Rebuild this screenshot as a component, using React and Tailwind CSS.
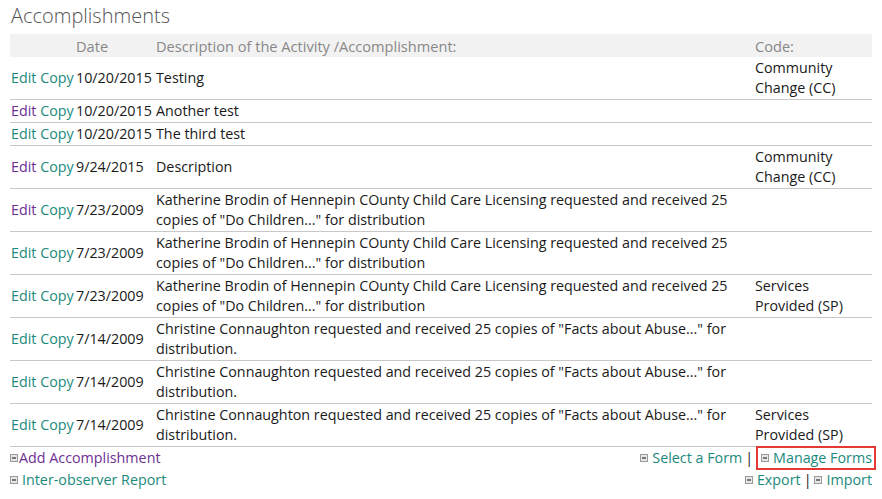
import React from 'react';

const TEAL = 'text-[#1b8a7c]';
const PURPLE = 'text-[#6e2f93]';

const rows = [
  { v: false, date: '10/20/2015', desc: ['Testing'], code: ['Community', 'Change (CC)'] },
  { v: true, date: '10/20/2015', desc: ['Another test'] },
  { v: false, date: '10/20/2015', desc: ['The third test'] },
  { v: true, date: '9/24/2015', desc: ['Description'], code: ['Community', 'Change (CC)'] },
  {
    v: true,
    date: '7/23/2009',
    desc: ['Katherine Brodin of Hennepin COunty Child Care Licensing requested and received 25', 'copies of "Do Children..." for distribution'],
  },
  {
    v: false,
    date: '7/23/2009',
    desc: ['Katherine Brodin of Hennepin COunty Child Care Licensing requested and received 25', 'copies of "Do Children..." for distribution'],
  },
  {
    v: false,
    date: '7/23/2009',
    desc: ['Katherine Brodin of Hennepin COunty Child Care Licensing requested and received 25', 'copies of "Do Children..." for distribution'],
    code: ['Services', 'Provided (SP)'],
  },
  {
    v: false,
    date: '7/14/2009',
    desc: ['Christine Connaughton requested and received 25 copies of "Facts about Abuse..." for', 'distribution.'],
  },
  {
    v: false,
    date: '7/14/2009',
    desc: ['Christine Connaughton requested and received 25 copies of "Facts about Abuse..." for', 'distribution.'],
  },
  {
    v: false,
    date: '7/14/2009',
    desc: ['Christine Connaughton requested and received 25 copies of "Facts about Abuse..." for', 'distribution.'],
    code: ['Services', 'Provided (SP)'],
  },
];

function Box({ tight }) {
  return (
    <span
      className={`inline-flex items-center justify-center w-[8px] h-[8px] border border-[#9a9a9a] bg-[#e6e6e6] align-middle relative top-[-1px] ${
        tight ? 'mr-[1px]' : 'mr-[4px]'
      }`}
    >
      <span className="w-[4px] h-[2px] bg-[#777]" />
    </span>
  );
}

function Lines({ lines }) {
  return lines.map((l, i) => (
    <div key={i} className="whitespace-nowrap">
      {l}
    </div>
  ));
}

export default function App() {
  return (
    <div
      className="w-[882px] h-[499px] bg-white text-[#1a1a1a] text-[14.3px] leading-[20px] pl-[10px] pr-[10px]"
      style={{ fontFamily: '"Open Sans", "Noto Sans", sans-serif' }}
    >
      <h2 className="text-[20px] font-light text-[#555] leading-[28px] pt-[2px] pb-[4px] pl-[1px]">Accomplishments</h2>
      <table className="w-[862px] table-fixed border-collapse">
        <colgroup>
          <col className="w-[66px]" />
          <col className="w-[80px]" />
          <col className="w-[599px]" />
          <col className="w-[117px]" />
        </colgroup>
        <thead>
          <tr className="bg-[#f2f2f2] text-[#888] text-[14.6px] h-[23px]">
            <th className="font-normal text-left" />
            <th className="font-normal text-left">Date</th>
            <th className="font-normal text-left whitespace-nowrap">Description of the Activity /Accomplishment:</th>
            <th className="font-normal text-left">Code:</th>
          </tr>
        </thead>
        <tbody>
          {rows.map((r, i) => (
            <tr key={i} className={i > 0 ? 'border-t border-[#c8c8c8]' : ''}>
              <td className="py-[1px] pl-[1px] whitespace-nowrap align-middle">
                <span className={r.v ? PURPLE : TEAL}>Edit</span> <span className={TEAL}>Copy</span>
              </td>
              <td className="py-[1px] whitespace-nowrap align-middle">{r.date}</td>
              <td className="py-[1px] align-middle">
                <Lines lines={r.desc} />
              </td>
              <td className="py-[1px] align-middle">{r.code ? <Lines lines={r.code} /> : null}</td>
            </tr>
          ))}
        </tbody>
      </table>
      <div className="border-t border-[#c8c8c8] flex justify-between items-center h-[23px]">
        <span className={PURPLE}>
          <Box tight />
          Add Accomplishment
        </span>
        <span className="flex items-center">
          <span className={TEAL}>
            <Box />Select a Form
          </span>
          <span className="mx-[3px] text-[#222]">|</span>
          <span className={`${TEAL} border-2 border-[#e53935] pl-[3px] pr-[2px] mr-[-4px] leading-[20px]`}>
            <Box />Manage Forms
          </span>
        </span>
      </div>
      <div className="flex justify-between items-center h-[22px]">
        <span className={TEAL}>
          <Box />Inter-observer Report
        </span>
        <span className="flex items-center">
          <span className={TEAL}>
            <Box />Export
          </span>
          <span className="mx-[3px] text-[#222]">|</span>
          <span className={TEAL}>
            <Box />Import
          </span>
        </span>
      </div>
    </div>
  );
}
